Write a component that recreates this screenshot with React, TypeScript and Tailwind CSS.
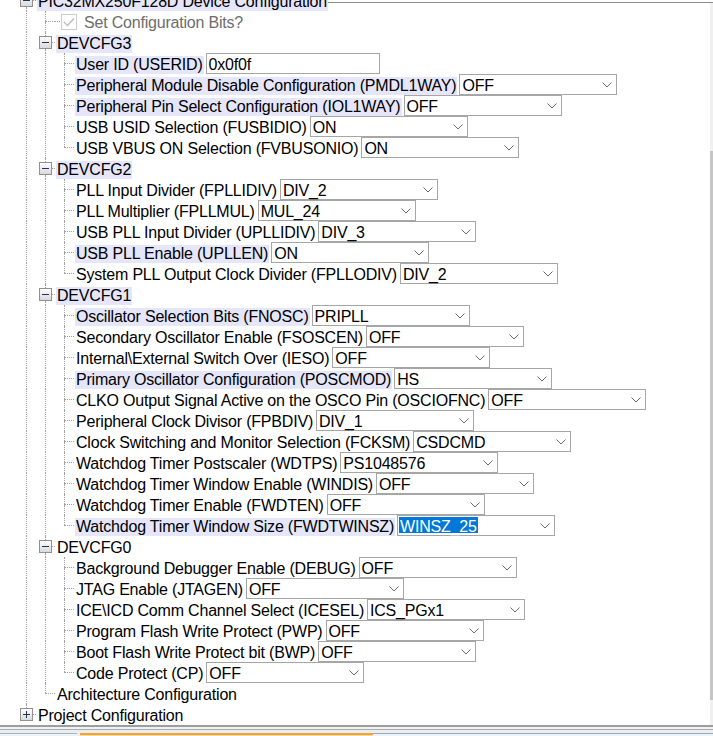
import React from 'react';

type Leaf = { label: string; value: string; input?: boolean; hl?: boolean; selected?: boolean };
type Group = { label: string; hl?: boolean; items: Leaf[] };

const groups: Group[] = [
  {
    label: 'DEVCFG3',
    hl: true,
    items: [
      { label: 'User ID (USERID)', value: '0x0f0f', input: true, hl: true },
      { label: 'Peripheral Module Disable Configuration (PMDL1WAY)', value: 'OFF', hl: true },
      { label: 'Peripheral Pin Select Configuration (IOL1WAY)', value: 'OFF', hl: true },
      { label: 'USB USID Selection (FUSBIDIO)', value: 'ON' },
      { label: 'USB VBUS ON Selection (FVBUSONIO)', value: 'ON' },
    ],
  },
  {
    label: 'DEVCFG2',
    hl: true,
    items: [
      { label: 'PLL Input Divider (FPLLIDIV)', value: 'DIV_2' },
      { label: 'PLL Multiplier (FPLLMUL)', value: 'MUL_24' },
      { label: 'USB PLL Input Divider (UPLLIDIV)', value: 'DIV_3' },
      { label: 'USB PLL Enable (UPLLEN)', value: 'ON', hl: true },
      { label: 'System PLL Output Clock Divider (FPLLODIV)', value: 'DIV_2' },
    ],
  },
  {
    label: 'DEVCFG1',
    hl: true,
    items: [
      { label: 'Oscillator Selection Bits (FNOSC)', value: 'PRIPLL', hl: true },
      { label: 'Secondary Oscillator Enable (FSOSCEN)', value: 'OFF' },
      { label: 'Internal\\External Switch Over (IESO)', value: 'OFF' },
      { label: 'Primary Oscillator Configuration (POSCMOD)', value: 'HS', hl: true },
      { label: 'CLKO Output Signal Active on the OSCO Pin (OSCIOFNC)', value: 'OFF' },
      { label: 'Peripheral Clock Divisor (FPBDIV)', value: 'DIV_1' },
      { label: 'Clock Switching and Monitor Selection (FCKSM)', value: 'CSDCMD' },
      { label: 'Watchdog Timer Postscaler (WDTPS)', value: 'PS1048576' },
      { label: 'Watchdog Timer Window Enable (WINDIS)', value: 'OFF' },
      { label: 'Watchdog Timer Enable (FWDTEN)', value: 'OFF' },
      { label: 'Watchdog Timer Window Size (FWDTWINSZ)', value: 'WINSZ_25', hl: true, selected: true },
    ],
  },
  {
    label: 'DEVCFG0',
    items: [
      { label: 'Background Debugger Enable (DEBUG)', value: 'OFF' },
      { label: 'JTAG Enable (JTAGEN)', value: 'OFF' },
      { label: 'ICE\\ICD Comm Channel Select (ICESEL)', value: 'ICS_PGx1' },
      { label: 'Program Flash Write Protect (PWP)', value: 'OFF' },
      { label: 'Boot Flash Write Protect bit (BWP)', value: 'OFF' },
      { label: 'Code Protect (CP)', value: 'OFF' },
    ],
  },
];

function Guide({ on }: { on: boolean }) {
  return (
    <div className="flex w-[19px] shrink-0">
      {on && <div className="ml-[9px] border-l border-dotted border-[#a0a0a0]" />}
    </div>
  );
}

function Branch({ last }: { last?: boolean }) {
  return (
    <div className="flex w-[19px] shrink-0 flex-col">
      <div className="ml-[9px] h-[10px] border-l border-dotted border-[#a0a0a0]" />
      <div className="ml-[9px] h-px w-[10px] border-t border-dotted border-[#a0a0a0]" />
      <div className={last ? 'flex-1' : 'ml-[9px] flex-1 border-l border-dotted border-[#a0a0a0]'} />
    </div>
  );
}

function Expander({ open, last }: { open: boolean; last?: boolean }) {
  return (
    <div className="flex w-[19px] shrink-0 flex-col">
      <div className="ml-[9px] h-[4px] border-l border-dotted border-[#a0a0a0]" />
      <div className="flex h-[13px] items-center">
        <div className="ml-[3px] grid h-[13px] w-[13px] place-items-center border border-[#919191] bg-gradient-to-b from-white to-[#d9d9d9]">
          <span className="col-start-1 row-start-1 h-px w-[7px] bg-[#1d3461]" />
          {!open && <span className="col-start-1 row-start-1 h-[7px] w-px bg-[#1d3461]" />}
        </div>
        <div className="h-px w-[3px] border-t border-dotted border-[#a0a0a0]" />
      </div>
      <div className={last ? 'flex-1' : 'ml-[9px] flex-1 border-l border-dotted border-[#a0a0a0]'} />
    </div>
  );
}

function Label({ text, hl }: { text: string; hl?: boolean }) {
  return (
    <span className={`ml-px h-[18px] shrink-0 self-end whitespace-nowrap px-px leading-[18px] ${hl ? 'bg-[#e6e6fa]' : ''}`}>
      {text}
    </span>
  );
}

function Field({ leaf }: { leaf: Leaf }) {
  if (leaf.input) {
    return (
      <div className="ml-[2px] flex h-[21px] w-[174px] shrink-0 items-start border border-[#a6a6a6] bg-white pl-[2px]">
        <span className="pt-[2px] leading-[18px]">{leaf.value}</span>
      </div>
    );
  }
  return (
    <div className="ml-[2px] flex h-[21px] w-[158px] shrink-0 items-start justify-between border border-[#a6a6a6] bg-white pl-[2px] pr-[4px]">
      <span
        className={
          leaf.selected
            ? '-ml-px mt-px h-[16px] whitespace-nowrap bg-[#0078d7] px-px leading-[19px] text-white'
            : 'whitespace-nowrap pt-[2px] leading-[18px]'
        }
      >
        {leaf.value}
      </span>
      <svg className="mt-[7px] shrink-0" width="10" height="6" viewBox="0 0 10 6">
        <path d="M0.5 0.5L5 5L9.5 0.5" fill="none" stroke="#6b6b6b" strokeWidth="1" />
      </svg>
    </div>
  );
}

function Row({ children }: { children: React.ReactNode }) {
  return <div className="flex h-[21px] shrink-0 pl-[17px]">{children}</div>;
}

export default function App() {
  return (
    <div className="flex h-[736px] w-[713px] flex-col overflow-hidden bg-white font-['Liberation_Sans',Arial,sans-serif] text-[16px] tracking-[-0.2px] text-black">
      <div className="flex h-[725px] shrink-0">
        <div className="min-w-0 flex-1 overflow-hidden">
          <div className="mt-[-10px] flex flex-col">
            <Row>
              <Expander open />
              <Label text="PIC32MX250F128D Device Configuration" hl />
              <div className="mt-[12px] h-px flex-1 self-start bg-[#8c8c8c]" />
            </Row>

            <Row>
              <Guide on />
              <Branch />
              <div className="mt-[10px] h-px w-[5px] self-start border-t border-dotted border-[#a0a0a0]" />
              <div className="ml-px flex h-[16px] w-[16px] shrink-0 items-center justify-center self-center border border-[#cccccc] bg-white">
                <svg width="12" height="10" viewBox="0 0 12 10">
                  <path d="M1 5L4.5 8.5L11 1.5" fill="none" stroke="#bdbdbd" strokeWidth="1.4" />
                </svg>
              </div>
              <span className="ml-[7px] h-[18px] self-end whitespace-nowrap leading-[18px] text-[#6d6d6d]">
                Set Configuration Bits?
              </span>
            </Row>

            {groups.map((g) => (
              <React.Fragment key={g.label}>
                <Row>
                  <Guide on />
                  <Expander open />
                  <Label text={g.label} hl={g.hl} />
                </Row>
                {g.items.map((leaf, i) => (
                  <Row key={leaf.label}>
                    <Guide on />
                    <Guide on />
                    <Branch last={i === g.items.length - 1} />
                    <Label text={leaf.label} hl={leaf.hl} />
                    <Field leaf={leaf} />
                  </Row>
                ))}
              </React.Fragment>
            ))}

            <Row>
              <Guide on />
              <Branch last />
              <Label text="Architecture Configuration" />
            </Row>

            <Row>
              <Expander open={false} last />
              <Label text="Project Configuration" />
            </Row>
          </div>
        </div>

        <div className="flex w-[3px] shrink-0 flex-col">
          <div className="h-[2px] bg-white" />
          <div className="h-px bg-[#8c8c8c]" />
          <div className="h-[148px] bg-[#f0f0f0]" />
          <div className="h-[549px] bg-[#c6c6c6]" />
          <div className="flex-1 bg-[#f0f0f0]" />
        </div>
      </div>

      <div className="flex h-[11px] shrink-0 flex-col">
        <div className="h-[2px] bg-[#9d9d9d]" />
        <div className="h-[2px] bg-[#eef2f5]" />
        <div className="h-px bg-[#ababab]" />
        <div className="h-[3px] bg-[#e9eef3]" />
        <div className="flex flex-1">
          <div className="w-[77px] border-t border-[#a9b5be] bg-[#eef2f6]" />
          <div className="w-[3px] bg-[#e9eef3]" />
          <div className="w-[293px] border-t-2 border-[#f4a236] bg-[#fcdca8]" />
          <div className="flex-1 border-t border-[#93adbf] bg-[#eef3f7]" />
        </div>
      </div>
    </div>
  );
}
